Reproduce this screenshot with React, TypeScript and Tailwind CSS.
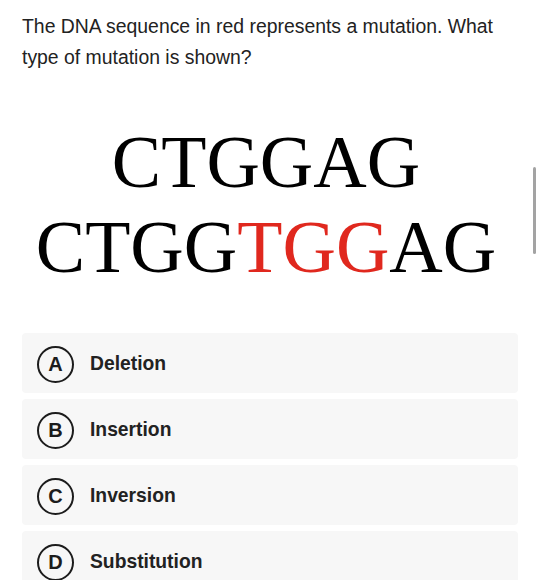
import React from 'react';

const options = [
  { letter: 'A', label: 'Deletion' },
  { letter: 'B', label: 'Insertion' },
  { letter: 'C', label: 'Inversion' },
  { letter: 'D', label: 'Substitution' },
];

const App: React.FC = () => {
  return (
    <div className="relative h-[580px] w-[540px] overflow-hidden bg-white font-['Liberation_Sans',Arial,sans-serif]">
      {/* Question */}
      <p className="px-[22px] pt-[11px] text-[19.4px] leading-[31px] text-[#222]">
        The DNA sequence in red represents a mutation. What type of mutation is shown?
      </p>

      {/* Sequence image */}
      <div className="mt-[47px] pr-[8px] text-center font-['Liberation_Serif','Times_New_Roman',serif] text-[74px] leading-[85px] text-black">
        <div>CTGGAG</div>
        <div>
          CTGG<span className="text-[#e0281e]">TGG</span>AG
        </div>
      </div>

      {/* Answer choices */}
      <div className="mt-[43px] flex flex-col gap-[6px] px-[22px]">
        {options.map((opt) => (
          <div key={opt.letter} className="flex h-[60px] items-center rounded-sm bg-[#f7f7f7] pl-[15px] pt-[2px]">
            <div className="flex h-[37px] w-[37px] items-center justify-center rounded-full border-[2.5px] border-[#1c1c1c] text-[20px] font-bold text-[#1c1c1c]">
              {opt.letter}
            </div>
            <span className="ml-[16px] text-[19.3px] font-bold text-[#222]">{opt.label}</span>
          </div>
        ))}
      </div>

      {/* Scrollbar overlay */}
      <div className="absolute right-[4px] top-[167px] h-[87px] w-[3px] rounded-full bg-[#a3a3a3]" />
    </div>
  );
};

export default App;
